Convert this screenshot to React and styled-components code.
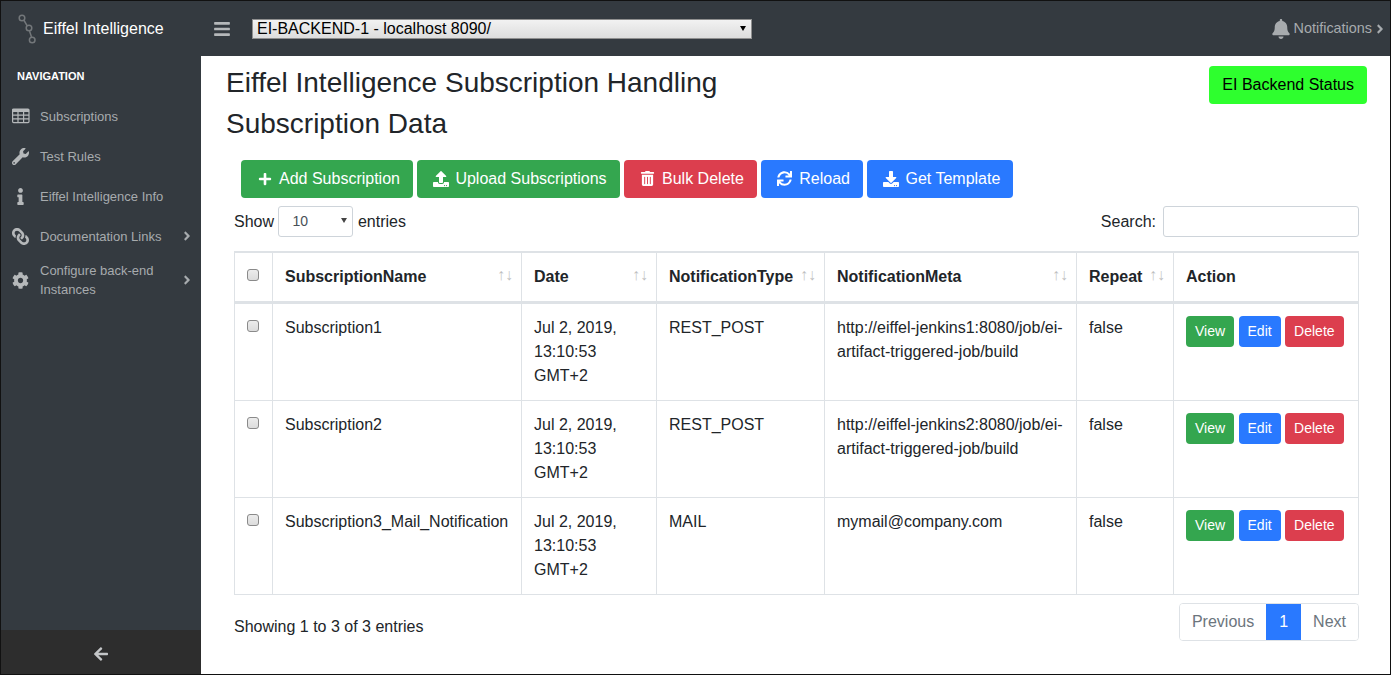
import styled, { createGlobalStyle } from "styled-components";
import {
  FaWrench, FaInfo, FaLink, FaCog, FaBell, FaBars, FaPlus, FaUpload,
  FaTrashAlt, FaSync, FaDownload, FaArrowLeft, FaAngleRight,
} from "react-icons/fa";

const GlobalStyle = createGlobalStyle`
  * { box-sizing: border-box; }
  html, body { margin: 0; height: 100%; overflow: hidden; }
  body {
    font-family: "Liberation Sans", Arial, sans-serif;
    font-size: 16px;
    line-height: 1.5;
    color: #212529;
    background: #fff;
  }
`;

const Frame = styled.div`
  width: 1391px;
  height: 675px;
  border: 1px solid #111;
  display: flex;
  flex-direction: column;
  overflow: hidden;
`;

const TopBar = styled.header`
  height: 55px;
  flex: none;
  background: #343a40;
  display: flex;
  align-items: center;
`;

const Brand = styled.div`
  width: 200px;
  display: flex;
  align-items: center;
  padding-left: 17px;
  gap: 7px;
  color: #fff;
  font-size: 16px;
`;

const Burger = styled.span`
  width: 51px;
  display: flex;
  padding-left: 12px;
  color: #b5b8ba;
  font-size: 18px;
`;

const SelectWrap = styled.span`
  position: relative;
  display: inline-flex;

  &::after {
    content: "";
    position: absolute;
    top: ${(p) => (p.$small ? "12px" : "7px")};
    right: 6px;
    border-style: solid;
    border-width: 5px 3px 0;
    border-color: ${(p) => (p.$small ? "#444" : "#000")} transparent transparent;
    pointer-events: none;
  }
`;

const BackendSelect = styled.select`
  appearance: none;
  width: 500px;
  height: 20px;
  border: 1px solid #8f8f8f;
  border-radius: 0;
  background: linear-gradient(#f2f2f2, #dddddd);
  font-family: inherit;
  font-size: 16px;
  line-height: 18px;
  color: #000;
  padding: 0 0 0 4px;
`;

const Notifications = styled.div`
  margin-left: auto;
  margin-right: 3px;
  padding-top: 1px;
  display: flex;
  align-items: center;
  gap: 3px;
  color: #a7abae;
  font-size: 14.4px;

  svg:last-child {
    margin-left: -2px;
  }
`;

const Body = styled.div`
  flex: 1;
  display: flex;
  min-height: 0;
`;

const Sidebar = styled.aside`
  width: 200px;
  flex: none;
  background: #343a40;
  display: flex;
  flex-direction: column;
`;

const NavHeading = styled.div`
  font-size: 11px;
  font-weight: 700;
  color: #fff;
  padding: 12px 0 0 16px;
  height: 40px;
  line-height: 16px;
`;

const NavList = styled.nav`
  flex: 1;
  display: flex;
  flex-direction: column;
`;

const NavItem = styled.div`
  min-height: ${(p) => (p.$tall ? "48px" : "40px")};
  display: flex;
  align-items: center;
  padding-left: 11px;
  color: #a7abae;
  font-size: 13px;
  line-height: 19px;
`;

const NavIcon = styled.span`
  width: 28px;
  flex: none;
  display: flex;
  font-size: 17px;
  color: #b5b8ba;

  svg {
    transform: ${(p) => (p.$flip ? "scaleX(-1)" : "none")};
  }
`;

const NavLabel = styled.span`
  width: 130px;
`;

const NavChevron = styled.span`
  display: flex;
  margin-left: 10px;
  font-size: 14px;
`;

const SidebarFoot = styled.div`
  height: 44px;
  flex: none;
  padding-top: 3px;
  background: #2d2d2d;
  color: #c4c6c8;
  display: flex;
  align-items: center;
  justify-content: center;
  font-size: 16px;
`;

const Main = styled.main`
  flex: 1;
  min-width: 0;
  padding: 10px 23px 0 25px;
`;

const TitleRow = styled.div`
  display: flex;
  justify-content: space-between;
  align-items: flex-start;
`;

const PageTitle = styled.h2`
  margin: 0 0 7.4px;
  font-size: 28px;
  font-weight: 500;
  line-height: 1.2;
`;

const Btn = styled.button`
  height: 38px;
  padding: 0 12px;
  border: 1px solid transparent;
  border-radius: 4px;
  font-family: inherit;
  font-size: 16px;
  color: ${(p) => (p.$tone === "status" ? "#000" : "#fff")};
  background: ${(p) =>
    ({ green: "#34a64f", blue: "#2979ff", red: "#dc3e4e", status: "#2eff2e" })[p.$tone]};
  display: inline-flex;
  align-items: center;
`;

const ToolButton = styled(Btn)`
  padding-left: 15px;
  gap: 7px;
`;

const ToolIcon = styled.span`
  width: 15px;
  display: flex;
  justify-content: center;

  svg {
    flex: none;
  }
`;

const SmallBtn = styled(Btn)`
  height: 31px;
  padding: 0 8px;
  font-size: 14px;
`;

const Toolbar = styled.div`
  display: flex;
  gap: 4.45px;
  margin: 12px 0 8px 15px;
`;

const TableArea = styled.div`
  margin: 0 8px;
`;

const Controls = styled.div`
  display: flex;
  justify-content: space-between;
  align-items: center;
  height: 31px;
  margin-bottom: 14px;
`;

const ControlLabel = styled.label`
  display: flex;
  align-items: center;
  padding-top: 2px;
  gap: ${(p) => p.$gap || "4.45px"};

  & > span, & > input {
    margin-top: -2px;
  }
`;

const LengthSelect = styled.select`
  appearance: none;
  width: 75px;
  height: 31px;
  padding: 0 0 0 13px;
  border: 1px solid #ced4da;
  border-radius: 3px;
  background: #fff;
  font-family: inherit;
  font-size: 14px;
  color: #495057;
`;

const SearchInput = styled.input`
  width: 196px;
  height: 31px;
  border: 1px solid #ced4da;
  border-radius: 3px;
`;

const Table = styled.table`
  width: 1124px;
  table-layout: fixed;
  border-collapse: collapse;
`;

const HeadCell = styled.th`
  position: relative;
  height: 50px;
  padding: 12px;
  text-align: left;
  font-weight: 700;
  border: 1px solid #dee2e6;
  border-top-width: 2px;
  border-bottom: 3px solid #dee2e6;

  ${(p) =>
    p.$sort &&
    `
    &::before, &::after {
      position: absolute;
      bottom: 14px;
      line-height: 24px;
      font-weight: 400;
      color: #000;
      opacity: 0.25;
    }
    &::before { content: "\\2191"; right: 16px; }
    &::after { content: "\\2193"; right: 8px; }
  `}
`;

const Cell = styled.td`
  height: 97px;
  padding: 12px;
  vertical-align: top;
  border: 1px solid #dee2e6;
`;

const CheckCell = styled(Cell)`
  padding: 16px 0 0;
`;

const CheckHead = styled(HeadCell)`
  padding: 0 0 4px;
`;

const Check = styled.input.attrs({ type: "checkbox" })`
  appearance: none;
  display: block;
  width: 12px;
  height: 12px;
  margin: 0 0 0 12px;
  border: 1px solid #8a8a8a;
  border-radius: 3px;
  background: linear-gradient(#ececec, #dcdcdc);
`;

const Actions = styled.div`
  display: flex;
  gap: 4.45px;
`;

const TableFoot = styled.div`
  display: flex;
  justify-content: space-between;
  align-items: flex-start;
  margin-top: 8px;
`;

const EntryCount = styled.span`
  margin-top: 12px;
`;

const Pager = styled.div`
  display: flex;
  height: 38px;
  border: 1px solid #dee2e6;
  border-radius: 4px;
  overflow: hidden;
`;

const PageLink = styled.span`
  display: flex;
  align-items: center;
  padding: 1px ${(p) => (p.$active ? "13px" : "12px")} 0;
  background: ${(p) => (p.$active ? "#2979ff" : "#fff")};
  color: ${(p) => (p.$active ? "#fff" : "#6c757d")};
`;

const Logo = () => (
  <svg width="18" height="32" viewBox="0 0 18 32" fill="none" stroke="#73777a" strokeWidth="1.5">
    <path d="M5.8 7 L9.2 12.8 M11.5 18 L13.5 24" />
    <circle cx="4" cy="5" r="2.8" />
    <circle cx="11" cy="15" r="2.8" />
    <circle cx="14.2" cy="27" r="2.8" />
  </svg>
);

const GridIcon = () => (
  <svg width="18" height="16" viewBox="0 0 18 16" fill="none" stroke="currentColor" strokeWidth="1.2">
    <rect x="0.6" y="1" width="16.4" height="13.6" rx="1" />
    <path d="M0.6 2.5 H17" strokeWidth="3" />
    <path d="M0.6 7.2 H17 M0.6 10.9 H17 M6 3 V14.6 M11.6 3 V14.6" />
  </svg>
);

const buttons = [
  { label: "Add Subscription", tone: "green", Icon: FaPlus, size: 14 },
  { label: "Upload Subscriptions", tone: "green", Icon: FaUpload, size: 16 },
  { label: "Bulk Delete", tone: "red", Icon: FaTrashAlt, size: 15 },
  { label: "Reload", tone: "blue", Icon: FaSync, size: 15 },
  { label: "Get Template", tone: "blue", Icon: FaDownload, size: 16 },
];

const navItems = [
  { label: "Subscriptions", Icon: GridIcon },
  { label: "Test Rules", Icon: FaWrench },
  { label: "Eiffel Intelligence Info", Icon: FaInfo },
  { label: "Documentation Links", Icon: FaLink, more: true, flip: true },
  { label: "Configure back-end Instances", Icon: FaCog, more: true, tall: true },
];

const columns = [
  { label: "SubscriptionName", width: 249, sort: true },
  { label: "Date", width: 135, sort: true },
  { label: "NotificationType", width: 168, sort: true },
  { label: "NotificationMeta", width: 252, sort: true },
  { label: "Repeat", width: 97, sort: true },
  { label: "Action", width: 185 },
];

const rows = [
  ["Subscription1", "REST_POST", "http://eiffel-jenkins1:8080/job/ei-artifact-triggered-job/build"],
  ["Subscription2", "REST_POST", "http://eiffel-jenkins2:8080/job/ei-artifact-triggered-job/build"],
  ["Subscription3_Mail_Notification", "MAIL", "mymail@company.com"],
];

export default function App() {
  return (
    <Frame>
      <GlobalStyle />
      <TopBar>
        <Brand>
          <Logo />
          Eiffel Intelligence
        </Brand>
        <Burger><FaBars /></Burger>
        <SelectWrap>
          <BackendSelect defaultValue="a">
            <option value="a">EI-BACKEND-1 - localhost 8090/</option>
          </BackendSelect>
        </SelectWrap>
        <Notifications>
          <FaBell size={20} />
          Notifications
          <FaAngleRight size={14} />
        </Notifications>
      </TopBar>
      <Body>
        <Sidebar>
          <NavList>
            <NavHeading>NAVIGATION</NavHeading>
            {navItems.map(({ label, Icon, more, tall, flip }) => (
              <NavItem key={label} $tall={tall}>
                <NavIcon $flip={flip}><Icon /></NavIcon>
                <NavLabel>{label}</NavLabel>
                {more && <NavChevron><FaAngleRight /></NavChevron>}
              </NavItem>
            ))}
          </NavList>
          <SidebarFoot><FaArrowLeft /></SidebarFoot>
        </Sidebar>
        <Main>
          <TitleRow>
            <div>
              <PageTitle>Eiffel Intelligence Subscription Handling</PageTitle>
              <PageTitle>Subscription Data</PageTitle>
            </div>
            <Btn $tone="status">EI Backend Status</Btn>
          </TitleRow>
          <Toolbar>
            {buttons.map(({ label, tone, Icon, size }) => (
              <ToolButton key={label} $tone={tone}>
                <ToolIcon><Icon size={size} /></ToolIcon>
                {label}
              </ToolButton>
            ))}
          </Toolbar>
          <TableArea>
            <Controls>
              <ControlLabel>
                Show
                <SelectWrap $small>
                  <LengthSelect defaultValue="10">
                    <option value="10">10</option>
                  </LengthSelect>
                </SelectWrap>
                entries
              </ControlLabel>
              <ControlLabel $gap="7px">
                Search:
                <SearchInput type="search" />
              </ControlLabel>
            </Controls>
            <Table>
              <colgroup>
                <col style={{ width: 38 }} />
                {columns.map((c) => <col key={c.label} style={{ width: c.width }} />)}
              </colgroup>
              <thead>
                <tr>
                  <CheckHead><Check /></CheckHead>
                  {columns.map((c) => (
                    <HeadCell key={c.label} $sort={c.sort}>{c.label}</HeadCell>
                  ))}
                </tr>
              </thead>
              <tbody>
                {rows.map(([name, type, meta]) => (
                  <tr key={name}>
                    <CheckCell><Check /></CheckCell>
                    <Cell>{name}</Cell>
                    <Cell>Jul 2, 2019, 13:10:53 GMT+2</Cell>
                    <Cell>{type}</Cell>
                    <Cell>{meta}</Cell>
                    <Cell>false</Cell>
                    <Cell>
                      <Actions>
                        <SmallBtn $tone="green">View</SmallBtn>
                        <SmallBtn $tone="blue">Edit</SmallBtn>
                        <SmallBtn $tone="red">Delete</SmallBtn>
                      </Actions>
                    </Cell>
                  </tr>
                ))}
              </tbody>
            </Table>
            <TableFoot>
              <EntryCount>Showing 1 to 3 of 3 entries</EntryCount>
              <Pager>
                <PageLink>Previous</PageLink>
                <PageLink $active>1</PageLink>
                <PageLink>Next</PageLink>
              </Pager>
            </TableFoot>
          </TableArea>
        </Main>
      </Body>
    </Frame>
  );
}
